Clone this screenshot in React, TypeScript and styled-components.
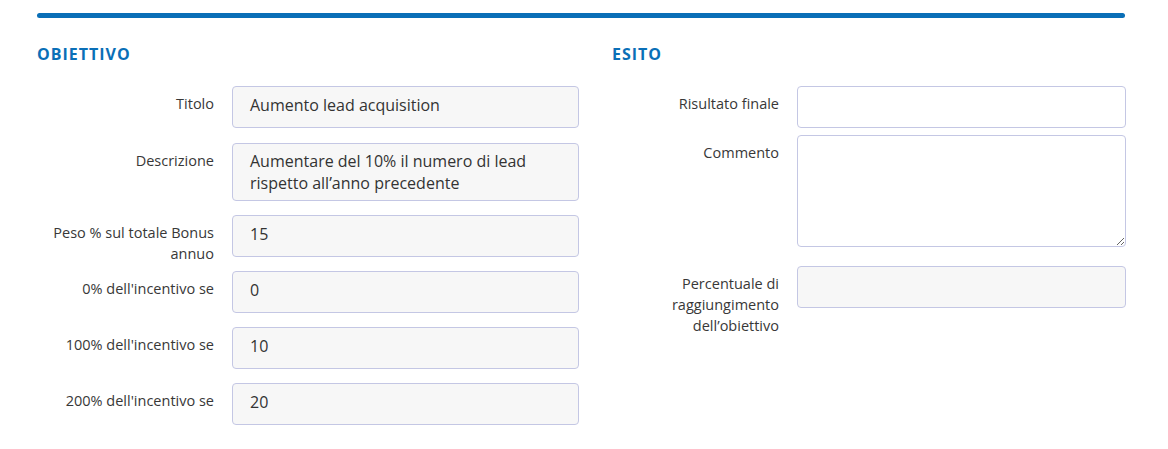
import styled, { createGlobalStyle } from "styled-components";

const GlobalStyle = createGlobalStyle`
  body {
    margin: 0;
    background: #ffffff;
    font-family: "Open Sans", "Noto Sans", sans-serif;
    color: #3b3b3b;
  }
`;

const Page = styled.div`
  width: 1088px;
  padding: 13px 0 0 37px;
`;

const TopBar = styled.div`
  height: 5px;
  border-radius: 3px;
  background-color: #0a6fb7;
`;

const Columns = styled.div`
  display: grid;
  grid-template-columns: 542px 514px;
  column-gap: 33px;
  margin-top: 25px;
`;

const Section = styled.section`
  display: flex;
  flex-direction: column;
`;

const Heading = styled.h2`
  margin: 0 0 21px 0;
  font-size: 16px;
  line-height: 22px;
  font-weight: 700;
  letter-spacing: 1px;
  color: #0a6fb7;
`;

const Row = styled.div<{ $label: number; $space: number }>`
  display: grid;
  grid-template-columns: ${(props) => props.$label}px 1fr;
  column-gap: 18px;
  align-items: start;
  margin-bottom: ${(props) => props.$space}px;
`;

// label may wrap past the field height without pushing the next row down
const Label = styled.label`
  height: 21px;
  overflow: visible;
  padding-top: 7px;
  text-align: right;
  font-size: 14.5px;
  line-height: 21px;
  color: #383838;
`;

const Field = styled.div<{ $multi?: boolean }>`
  box-sizing: border-box;
  height: ${(props) => (props.$multi ? "58px" : "42px")};
  padding: ${(props) => (props.$multi ? "6px 17px" : "7px 17px")};
  border: 1px solid #c4c7e4;
  border-radius: 4px;
  background-color: #f7f7f7;
  font-size: 16px;
  line-height: 22px;
  color: #333333;
`;

const TextInput = styled.input`
  box-sizing: border-box;
  width: 100%;
  height: 42px;
  padding: 0 17px;
  border: 1px solid #c4c7e4;
  border-radius: 4px;
  background-color: #ffffff;
  font-family: inherit;
  font-size: 16px;
  outline: none;
`;

const TextArea = styled.textarea`
  display: block;
  box-sizing: border-box;
  width: 100%;
  height: 112px;
  padding: 9px 17px;
  border: 1px solid #c4c7e4;
  border-radius: 4px;
  background-color: #ffffff;
  font-family: inherit;
  font-size: 16px;
  outline: none;
`;

interface IGoalRow {
  label: string;
  value: string;
  multi?: boolean;
  space: number;
}

const goalRows: IGoalRow[] = [
  { label: "Titolo", value: "Aumento lead acquisition", space: 15 },
  {
    label: "Descrizione",
    value: "Aumentare del 10% il numero di lead rispetto all’anno precedente",
    multi: true,
    space: 14,
  },
  { label: "Peso % sul totale Bonus annuo", value: "15", space: 14 },
  { label: "0% dell'incentivo se", value: "0", space: 14 },
  { label: "100% dell'incentivo se", value: "10", space: 14 },
  { label: "200% dell'incentivo se", value: "20", space: 0 },
];

function App() {
  return (
    <>
      <GlobalStyle />
      <Page>
        <TopBar />
        <Columns>
          <Section>
            <Heading>OBIETTIVO</Heading>
            {goalRows.map((row) => (
              <Row key={row.label} $label={177} $space={row.space}>
                <Label>{row.label}</Label>
                <Field $multi={row.multi}>{row.value}</Field>
              </Row>
            ))}
          </Section>
          <Section>
            <Heading>ESITO</Heading>
            <Row $label={167} $space={7}>
              <Label>Risultato finale</Label>
              <TextInput type="text" />
            </Row>
            <Row $label={167} $space={19}>
              <Label>Commento</Label>
              <TextArea />
            </Row>
            <Row $label={167} $space={0}>
              <Label>Percentuale di raggiungimento dell’obiettivo</Label>
              <Field />
            </Row>
          </Section>
        </Columns>
      </Page>
    </>
  );
}

export default App;
